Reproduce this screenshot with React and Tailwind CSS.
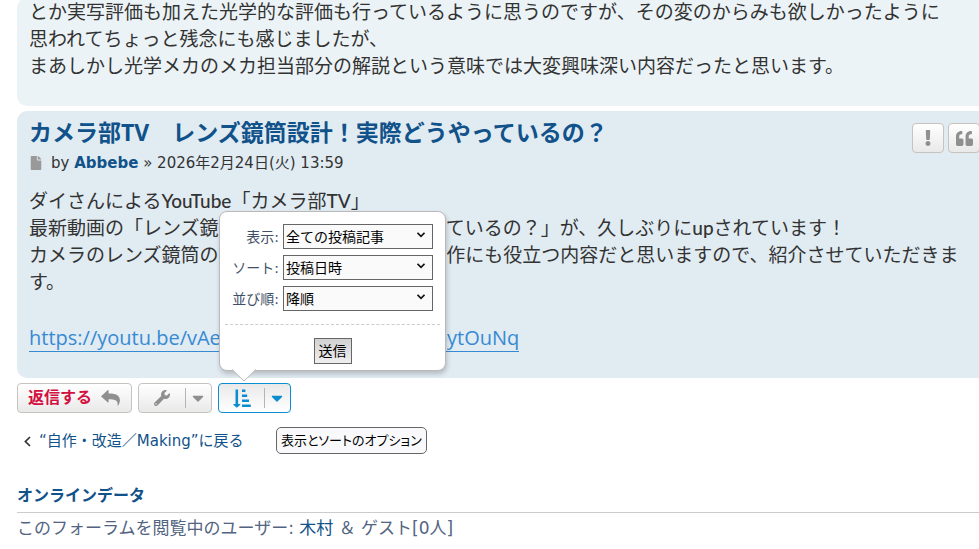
import { useState } from 'react';
import { FaCaretDown, FaExclamation, FaFile, FaQuoteLeft, FaWrench } from 'react-icons/fa';

const selects = [
    { id: 'st', label: '表示:', options: ['全ての投稿記事', '1日', '7日', '2週間', '1ヶ月'] },
    { id: 'sk', label: 'ソート:', options: ['投稿日時', '投稿者', '件名'] },
    { id: 'sd', label: '並び順:', options: ['降順', '昇順'] },
];

function ReplyIcon() {
    return (
        <svg viewBox="0 0 20 16" className="h-4 w-5" fill="currentColor" aria-hidden="true">
            <path d="M0.4 6 L6.6 0.3 Q7.6 -0.3 7.6 0.9 V3.4 C14 3.4 18.9 4.8 18.9 10.2 C18.9 12.2 18 14.2 17.1 15.4 C16.8 15.8 16.4 15.6 16.5 15.1 C17.2 10.3 14.2 9.2 7.6 9.2 V11.7 Q7.6 12.9 6.6 12.2 L0.4 6.8 Q0 6.4 0.4 6 Z" />
        </svg>
    );
}

function SortIcon() {
    return (
        <svg viewBox="0 0 18 19" className="h-[19px] w-[18px]" fill="currentColor" aria-hidden="true">
            <path d="M2.5 0.5h2.6v14.5h2q.6.2.2.7L4.2 18.4q-.4.3-.8 0L.4 15.7q-.4-.5.2-.7h1.9z" />
            <path d="M9 .5h3.4v2.4H9zM9 5.5h5.2v2.4H9zM9 10.5h7v2.4H9zM9 15.5h8.8v2.4H9z" />
        </svg>
    );
}

function SortMenu() {
    return (
        <form
            onSubmit={(e) => e.preventDefault()}
            className="absolute bottom-full left-px z-10 mb-3 w-[227px] rounded-lg border border-[#b9b9b9] bg-white px-[5px] pt-3 pb-1.5 text-sm text-[#425067] shadow-[1px_3px_5px_rgba(0,0,0,0.2)]"
        >
            <div className="flex flex-col gap-1.5 pr-[7px]">
                {selects.map((s) => (
                    <div key={s.id} className="flex items-center justify-end gap-1">
                        <label htmlFor={s.id}>{s.label}</label>
                        <div className="relative">
                            <select
                                id={s.id}
                                className="block h-[25px] w-[150px] appearance-none border border-[#666] bg-[#fafafa] px-0.5 text-sm text-black"
                            >
                                {s.options.map((o) => (
                                    <option key={o}>{o}</option>
                                ))}
                            </select>
                            <svg
                                viewBox="0 0 8 6"
                                className="pointer-events-none absolute top-2 right-2 h-1.5 w-2"
                                fill="none"
                                stroke="#111"
                                strokeWidth="1.6"
                                aria-hidden="true"
                            >
                                <path d="M0.5 0.8 4 4.4 7.5 0.8" />
                            </svg>
                        </div>
                    </div>
                ))}
            </div>
            <hr className="my-[13px] border-0 border-t border-dashed border-[#ccc]" />
            <div className="flex justify-center">
                <button
                    type="submit"
                    className="h-[26px] border border-[#666] bg-linear-to-b from-[#d2d2d2] to-[#efefef] px-1 text-sm text-black"
                >
                    送信
                </button>
            </div>
            <svg viewBox="0 0 24 13" className="absolute top-full left-3 -mt-px h-[13px] w-6" aria-hidden="true">
                <path d="M0 0H24L12 12Z" fill="#fff" />
                <path d="M0 .5 12 12 24 .5" fill="none" stroke="#b9b9b9" />
            </svg>
        </form>
    );
}

function App() {
    const [menuOpen, setMenuOpen] = useState(true);

    return (
        <div className="min-h-screen overflow-hidden bg-white pl-[17px] font-['DejaVu_Sans','Noto_Sans_CJK_JP',sans-serif] text-[#333]">
            <div className="-mt-0.5 rounded-l-[10px] bg-[#ecf3f7] pr-4 pb-[27px] pl-3 font-['Lato','Noto_Sans_CJK_JP',sans-serif] text-[19px] leading-[27px]">
                <p>
                    とか実写評価も加えた光学的な評価も行っているように思うのですが、その変のからみも欲しかったように
                    <br />
                    思われてちょっと残念にも感じましたが、
                    <br />
                    まあしかし光学メカのメカ担当部分の解説という意味では大変興味深い内容だったと思います。
                </p>
            </div>

            <div className="mt-[5px] rounded-l-[10px] bg-[#e1ebf2] pt-1.5 pb-[26px] pl-3">
                <div className="flex items-start justify-between">
                    <div>
                        <h3 className="font-['Open_Sans','Noto_Sans_CJK_JP',sans-serif] text-[23px] leading-[30px] font-bold text-[#105289]">
                            <a href="#post">カメラ部TV　レンズ鏡筒設計！実際どうやっているの？</a>
                        </h3>
                        <p className="flex items-center gap-2 text-[15px] leading-8">
                            <FaFile className="h-3.5 w-3.5 text-[#999]" />
                            <span>
                                by{' '}
                                <a href="#abbebe" className="font-bold text-[#105289]">
                                    Abbebe
                                </a>{' '}
                                » 2026年2月24日(火) 13:59
                            </span>
                        </p>
                    </div>
                    <div className="-mr-px mt-1.5 flex gap-1 text-[#8f8f8f]">
                        <button
                            aria-label="報告"
                            className="flex h-[30px] w-8 items-center justify-center rounded border border-[#c7c3bf] bg-linear-to-b from-white to-[#e9e9e9]"
                        >
                            <FaExclamation className="h-4" />
                        </button>
                        <button
                            aria-label="引用"
                            className="flex h-[30px] w-8 items-center justify-center rounded border border-[#c7c3bf] bg-linear-to-b from-white to-[#e9e9e9]"
                        >
                            <FaQuoteLeft className="h-[17px] w-[17px]" />
                        </button>
                    </div>
                </div>
                <div className="mt-2 pr-4 font-['Lato','Noto_Sans_CJK_JP',sans-serif] text-[19px] leading-[27px]">
                    ダイさんによる<span className="font-medium">YouTube</span>「カメラ部<span className="font-medium">TV</span>」
                    <br />
                    最新動画の「レンズ鏡筒設計！　実際にどうやっているの？」が、久しぶりに<span className="font-medium">up</span>されています！
                    <br />
                    カメラのレンズ鏡筒の設計の話題だが、機材の製作にも役立つ内容だと思いますので、紹介させていただきます。
                    <br />
                    <br />
                    <a
                        href="#video"
                        className="mt-0.5 inline-block border-b border-[#368ad2] font-['Open_Sans',sans-serif] text-xl leading-[27px] text-[#368ad2]"
                    >
                        https://youtu.be/vAeKq3LmZ0w?si=h2RsfdXpytOuNq
                    </a>
                </div>
            </div>

            <div className="mt-[5px] flex gap-1.5">
                <button className="flex h-[30px] items-center gap-[9px] rounded border border-[#c7c3bf] bg-linear-to-b from-white to-[#e9e9e9] px-2.5 text-base font-bold text-[#d31141]">
                    返信する
                    <span className="text-[#8f8f8f]">
                        <ReplyIcon />
                    </span>
                </button>
                <button
                    aria-label="トピックツール"
                    className="flex h-[30px] w-[74px] items-center rounded border border-[#c7c3bf] bg-linear-to-b from-white to-[#e9e9e9] text-[#8f8f8f]"
                >
                    <span className="flex flex-1 justify-center">
                        <FaWrench className="h-4 w-4" />
                    </span>
                    <span className="flex h-5 w-[26px] items-center justify-center border-l border-[#b4b4b4] pr-0.5">
                        <FaCaretDown className="h-[18px] w-[18px]" />
                    </span>
                </button>
                <div className="relative">
                    <button
                        aria-label="表示とソート"
                        onClick={() => setMenuOpen(!menuOpen)}
                        className="flex h-[30px] w-[73px] items-center rounded border border-[#0a8ed0] bg-linear-to-b from-[#e9e9e9] to-white text-[#0a8ed0]"
                    >
                        <span className="flex flex-1 justify-center">
                            <SortIcon />
                        </span>
                        <span className="flex h-5 w-[26px] items-center justify-center border-l border-[#b4b4b4] pr-0.5">
                            <FaCaretDown className="h-[18px] w-[18px]" />
                        </span>
                    </button>
                    {menuOpen && <SortMenu />}
                    <div
                        role="tooltip"
                        className="absolute top-11 left-[58px] rounded-[5px] border border-[#666] bg-[#f9f9fb] px-1 text-[13px] leading-[25px] whitespace-nowrap text-black [font-feature-settings:'palt']"
                    >
                        表示とソートのオプション
                    </div>
                </div>
            </div>

            <a href="#forum" className="mt-4 flex w-fit items-center gap-2 pl-[7px] text-[15px] leading-6 text-[#105289]">
                <svg viewBox="0 0 7 11" className="h-[11px] w-[7px]" fill="none" stroke="#333" strokeWidth="1.7" aria-hidden="true">
                    <path d="M6 1 1.4 5.5 6 10" />
                </svg>
                “自作・改造／Making”に戻る
            </a>

            <h3 className="mt-[31px] border-b border-[#ccc] pb-1 text-base leading-6 font-bold text-[#105289]">
                <a href="#online">オンラインデータ</a>
            </h3>
            <p className="mt-[3px] text-[17px] leading-6 text-[#536482]">
                このフォーラムを閲覧中のユーザー:{' '}
                <a href="#kimura" className="text-[#105289]">
                    木村
                </a>{' '}
                ＆ ゲスト[0人]
            </p>
        </div>
    );
}

export default App;
